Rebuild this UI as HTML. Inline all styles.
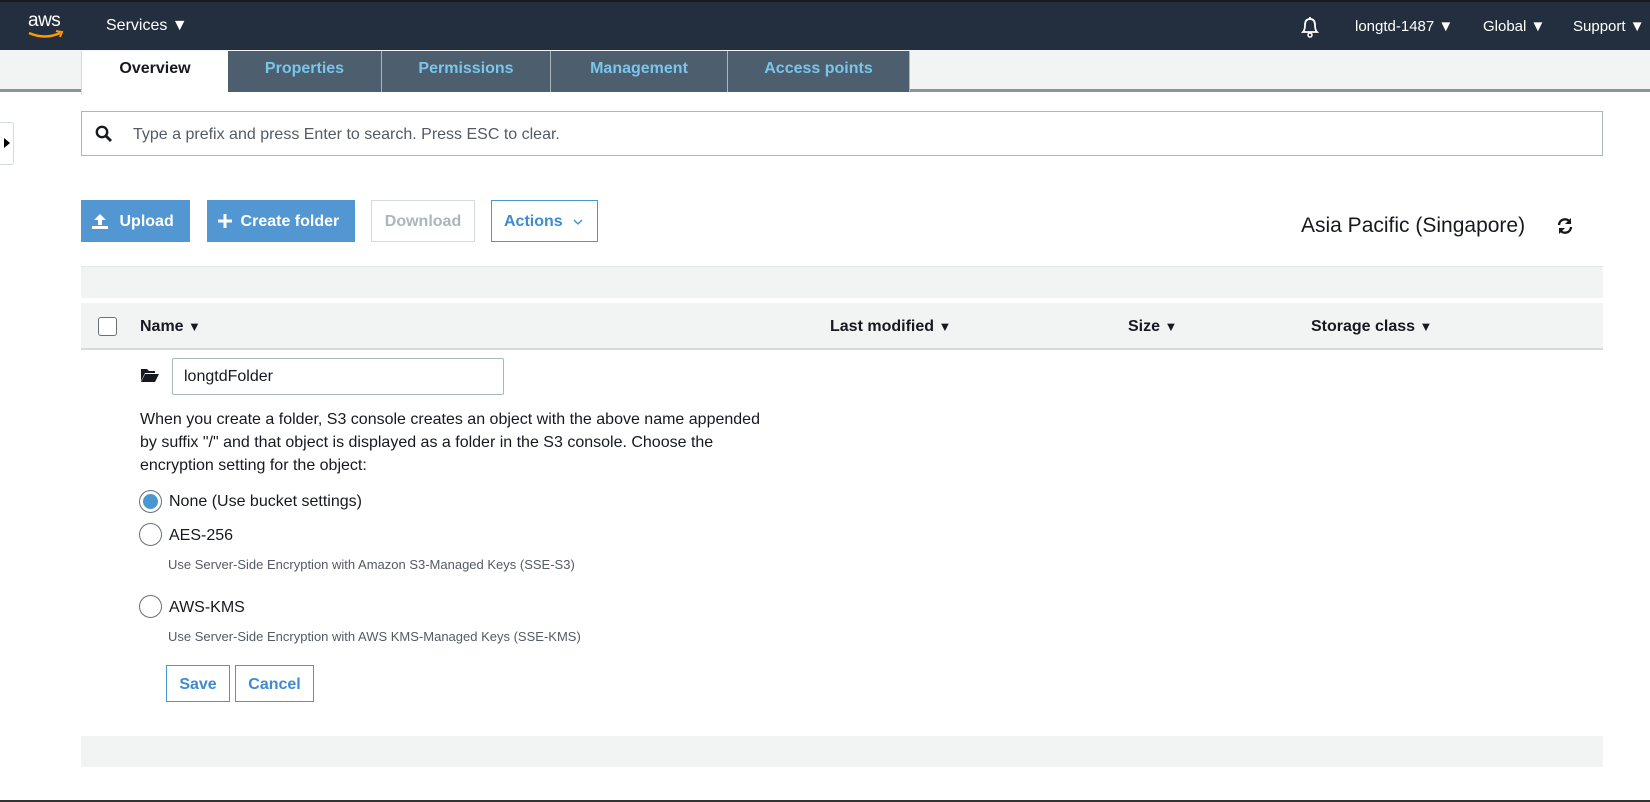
<!DOCTYPE html>
<html><head><meta charset="utf-8"><style>
*{box-sizing:border-box;margin:0;padding:0}
body{width:1650px;height:802px;position:relative;overflow:hidden;background:#fff;font-family:"Liberation Sans",Arial,sans-serif;color:#16191f}
.a{position:absolute}
.hdr{left:0;top:0;width:1650px;height:50px;background:#232f3e;border-top:2px solid #1a1a1a}
.hw{color:#fff;font-size:16px;top:18px}
.tabbar{left:0;top:50px;width:1650px;height:42px;background:#f2f3f3;border-bottom:3px solid #879596}
.tab{top:51px;height:41px;background:#4d5e6e;color:#79c6ea;font-weight:bold;font-size:16px;text-align:center;line-height:36px;border-right:1px solid #aab7b8}
.btn{top:200px;height:42px;font-size:16px;font-weight:bold;line-height:44px;text-align:center}
.radio{width:23px;height:23px;border:1.5px solid #687078;border-radius:50%;background:#fff}
.lbl{font-size:16px;color:#16191f}
.desc{font-size:13px;color:#545b64}
.ob{height:37px;border:1.5px solid #4a98d2;color:#3f8ad0;font-size:16px;font-weight:bold;text-align:center;line-height:38px;background:#fff}
.th{top:304px;font-size:16px;font-weight:bold;line-height:46px}
</style></head><body>
<div class="a hdr"></div>
<div class="a hw" style="left:28px;top:10px;font-size:19px;letter-spacing:-0.5px">aws</div>
<svg class="a" style="left:27px;top:30px" width="38" height="10" viewBox="0 0 38 10"><path d="M2 3 Q18 10 33 3" stroke="#f90" stroke-width="2.5" fill="none"/><path d="M29 1 L35 2 L33 7" stroke="#f90" stroke-width="2" fill="none"/></svg>
<div class="a hw" style="left:106px;top:17px">Services ▼</div>
<svg class="a" style="left:1299px;top:15px" width="22" height="24" viewBox="0 0 22 24"><path d="M4 17 Q6 15 6 10 Q6 4 11 4 Q16 4 16 10 Q16 15 18 17 Z M11 2 V4" stroke="#fff" stroke-width="1.8" fill="none"/><circle cx="11" cy="20" r="2" stroke="#fff" stroke-width="1.5" fill="none"/></svg>
<div class="a hw" style="left:1355px;font-size:15px">longtd-1487 ▼</div>
<div class="a hw" style="left:1483px;font-size:15px">Global ▼</div>
<div class="a hw" style="left:1573px;font-size:15px">Support ▼</div>
<div class="a tabbar"></div>
<div class="a" style="left:81px;top:51px;width:147px;height:44px;background:#fff;border-left:1px solid #d5dbdb;font-weight:bold;font-size:16px;text-align:center;line-height:36px">Overview</div>
<div class="a tab" style="left:228px;width:154px">Properties</div>
<div class="a tab" style="left:382px;width:169px">Permissions</div>
<div class="a tab" style="left:551px;width:177px">Management</div>
<div class="a tab" style="left:728px;width:182px">Access points</div>
<div class="a" style="left:0;top:122px;width:14px;height:43px;border:1px solid #d5dbdb;border-left:none;border-radius:0 3px 3px 0;background:#fff"></div>
<div class="a" style="left:4px;top:138px;border-left:6px solid #000;border-top:5px solid transparent;border-bottom:5px solid transparent"></div>
<div class="a" style="left:81px;top:111px;width:1522px;height:45px;border:1.5px solid #aab7b8"></div>
<svg class="a" style="left:95px;top:125px" width="18" height="18" viewBox="0 0 18 18"><circle cx="7" cy="7" r="5.2" stroke="#16191f" stroke-width="2.4" fill="none"/><path d="M10.5 10.5 L16 16" stroke="#16191f" stroke-width="2.8"/></svg>
<div class="a" style="left:133px;top:126px;font-size:16px;color:#545b64">Type a prefix and press Enter to search. Press ESC to clear.</div>
<div class="a btn" style="left:81px;width:109px;background:#5297d1;color:#fff">&nbsp;&nbsp;&nbsp;&nbsp;&nbsp;Upload</div>
<svg class="a" style="left:91px;top:212px" width="18" height="18" viewBox="0 0 18 18"><path d="M9 2 L3 8 H7 V13 H11 V8 H15 Z" fill="#fff"/><rect x="1" y="14" width="16" height="3" fill="#fff"/></svg>
<div class="a btn" style="left:207px;width:148px;background:#5297d1;color:#fff">&nbsp;&nbsp;&nbsp;&nbsp;Create folder</div>
<svg class="a" style="left:218px;top:214px" width="14" height="14" viewBox="0 0 14 14"><path d="M7 0 V14 M0 7 H14" stroke="#fff" stroke-width="3"/></svg>
<div class="a btn" style="left:371px;width:104px;border:1.5px solid #d5dbdb;color:#aab7b8;line-height:41px">Download</div>
<div class="a btn" style="left:491px;width:107px;border:1.5px solid #4a98d2;color:#3f8ad0;line-height:41px;text-align:left;padding-left:12px">Actions</div>
<svg class="a" style="left:573px;top:219px" width="10" height="6" viewBox="0 0 10 6"><path d="M1 1 L5 5 L9 1" stroke="#3f8ad0" stroke-width="1.3" fill="none"/></svg>
<div class="a" style="left:1301px;top:214px;font-size:21px;color:#16191f">Asia Pacific (Singapore)</div>
<svg class="a" style="left:1556px;top:217px" width="18" height="18" viewBox="0 0 18 18"><path d="M3 8 A6 6 0 0 1 14 5 M15 10 A6 6 0 0 1 4 13" stroke="#16191f" stroke-width="2.4" fill="none"/><path d="M15 1 V7 H9 Z M3 17 V11 H9 Z" fill="#16191f"/></svg>
<div class="a" style="left:81px;top:266px;width:1522px;height:32px;background:#f2f3f3;border-top:1px solid #e4e7e7"></div>
<div class="a" style="left:81px;top:303px;width:1522px;height:47px;background:#f2f3f3;border-bottom:2px solid #d5dbdb"></div>
<div class="a" style="left:98px;top:317px;width:19px;height:19px;border:1.5px solid #687078;border-radius:3px;background:#fff"></div>
<div class="a th" style="left:140px">Name <span style="font-size:13px">▼</span></div>
<div class="a th" style="left:830px">Last modified <span style="font-size:13px">▼</span></div>
<div class="a th" style="left:1128px">Size <span style="font-size:13px">▼</span></div>
<div class="a th" style="left:1311px">Storage class <span style="font-size:13px">▼</span></div>
<svg class="a" style="left:140px;top:367px" width="20" height="16" viewBox="0 0 20 16"><path d="M1 2 H7 L9 4 H15 V6 H5 L1 14 Z" fill="#16191f"/><path d="M5 7 H19 L15 15 H1 Z" fill="#16191f"/></svg>
<div class="a" style="left:172px;top:358px;width:332px;height:37px;border:1.5px solid #aab7b8;border-radius:2px;font-size:16px;line-height:36px;padding-left:11px">longtdFolder</div>
<div class="a" style="left:140px;top:408px;width:625px;font-size:16px;line-height:23px">When you create a folder, S3 console creates an object with the above name appended by suffix "/" and that object is displayed as a folder in the S3 console. Choose the encryption setting for the object:</div>
<div class="a radio" style="left:139px;top:490px"><div style="margin:2.5px;width:15px;height:15px;border-radius:50%;background:#4a98d2"></div></div>
<div class="a lbl" style="left:169px;top:493px">None (Use bucket settings)</div>
<div class="a radio" style="left:139px;top:523px"></div>
<div class="a lbl" style="left:169px;top:527px">AES-256</div>
<div class="a desc" style="left:168px;top:557px">Use Server-Side Encryption with Amazon S3-Managed Keys (SSE-S3)</div>
<div class="a radio" style="left:139px;top:595px"></div>
<div class="a lbl" style="left:169px;top:599px">AWS-KMS</div>
<div class="a desc" style="left:168px;top:629px">Use Server-Side Encryption with AWS KMS-Managed Keys (SSE-KMS)</div>
<div class="a ob" style="left:166px;top:665px;width:64px">Save</div>
<div class="a ob" style="left:235px;top:665px;width:79px">Cancel</div>
<div class="a" style="left:81px;top:736px;width:1522px;height:31px;background:#f2f3f3"></div>
<div class="a" style="left:0;top:800px;width:1650px;height:2px;background:#333"></div>
</body></html>
